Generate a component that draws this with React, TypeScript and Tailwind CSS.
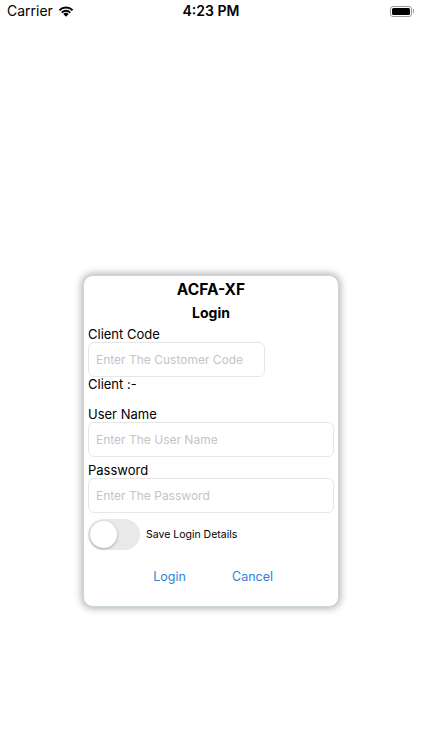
import React from "react";

function Wifi() {
  return (
    <svg width="16" height="12" viewBox="0 0 16 12" className="block">
      <path d="M8 11.8 L5.3 9.1 A3.8 3.8 0 0 1 10.7 9.1 Z" fill="#000" />
      <path d="M3.1 6.9 A6.9 6.9 0 0 1 12.9 6.9 L11.6 8.2 A5 5 0 0 0 4.4 8.2 Z" fill="#000" />
      <path d="M0.8 4.6 A10.2 10.2 0 0 1 15.2 4.6 L13.9 5.9 A8.3 8.3 0 0 0 2.1 5.9 Z" fill="#000" />
    </svg>
  );
}

function Battery() {
  return (
    <div className="flex items-center">
      <div className="w-[22px] h-[11px] rounded-[3px] border border-[#9a9a9a] p-[1px]">
        <div className="w-full h-full rounded-[1.5px] bg-black" />
      </div>
      <div className="w-[1.5px] h-[4px] bg-[#9a9a9a] rounded-r-[1px] ml-[1px]" />
    </div>
  );
}

export default function App() {
  const font = { fontFamily: "Inter, 'Liberation Sans', Arial, sans-serif" };
  return (
    <div className="w-[422px] h-[750px] bg-white flex flex-col" style={font}>
      <div className="h-[22px] flex items-center justify-between px-[7px] relative">
        <div className="flex items-center gap-[5px] text-[14px] text-black leading-none">
          <span>Carrier</span>
          <Wifi />
        </div>
        <div className="absolute left-0 right-0 text-center text-[14px] font-semibold leading-none">4:23 PM</div>
        <div className="pr-[1px]">
          <Battery />
        </div>
      </div>
      <div className="mt-[253px] mx-auto w-[256px] rounded-[10px] border border-[#cbd5dc] bg-white shadow-[0_0_7px_2px_rgba(0,0,0,0.28)] px-[4px] pb-[19px]">
        <div className="pt-[4px] h-[25px] text-center text-[15.5px] font-bold leading-[20px] text-black">ACFA-XF</div>
        <div className="mt-[3px] h-[18px] text-center text-[14px] font-bold leading-[18px] text-black">Login</div>
        <div className="mt-[4px] h-[16px] text-[13px] leading-[16px] text-black">Client Code</div>
        <div className="w-[177px] h-[35px] rounded-[6px] border border-[#e6e6e6] flex items-center px-[7px] text-[12px] text-[#c4c4c7]">
          Enter The Customer Code
        </div>
        <div className="mt-[-1px] h-[16px] text-[13px] leading-[16px] text-black">Client :-</div>
        <div className="mt-[14px] h-[16px] text-[13px] leading-[16px] text-black">User Name</div>
        <div className="h-[35px] rounded-[6px] border border-[#e6e6e6] flex items-center px-[7px] text-[12px] text-[#c4c4c7]">
          Enter The User Name
        </div>
        <div className="mt-[5px] h-[16px] text-[13px] leading-[16px] text-black">Password</div>
        <div className="h-[35px] rounded-[6px] border border-[#e6e6e6] flex items-center px-[7px] text-[12px] text-[#c4c4c7]">
          Enter The Password
        </div>
        <div className="mt-[6px] flex items-center gap-[6px]">
          <div className="w-[52px] h-[31px] rounded-full bg-[#e9e9eb] p-[2px] flex items-center">
            <div className="w-[27px] h-[27px] rounded-full bg-white shadow-[0_1px_3px_rgba(0,0,0,0.3)]" />
          </div>
          <span className="text-[10.5px] text-black">Save Login Details</span>
        </div>
        <div className="mt-[17px] h-[20px] flex items-center justify-center text-[12.5px] text-[#2f7fd7]">
          <span className="w-[83px] text-center">Login</span>
          <span className="w-[83px] text-center">Cancel</span>
        </div>
      </div>
    </div>
  );
}
